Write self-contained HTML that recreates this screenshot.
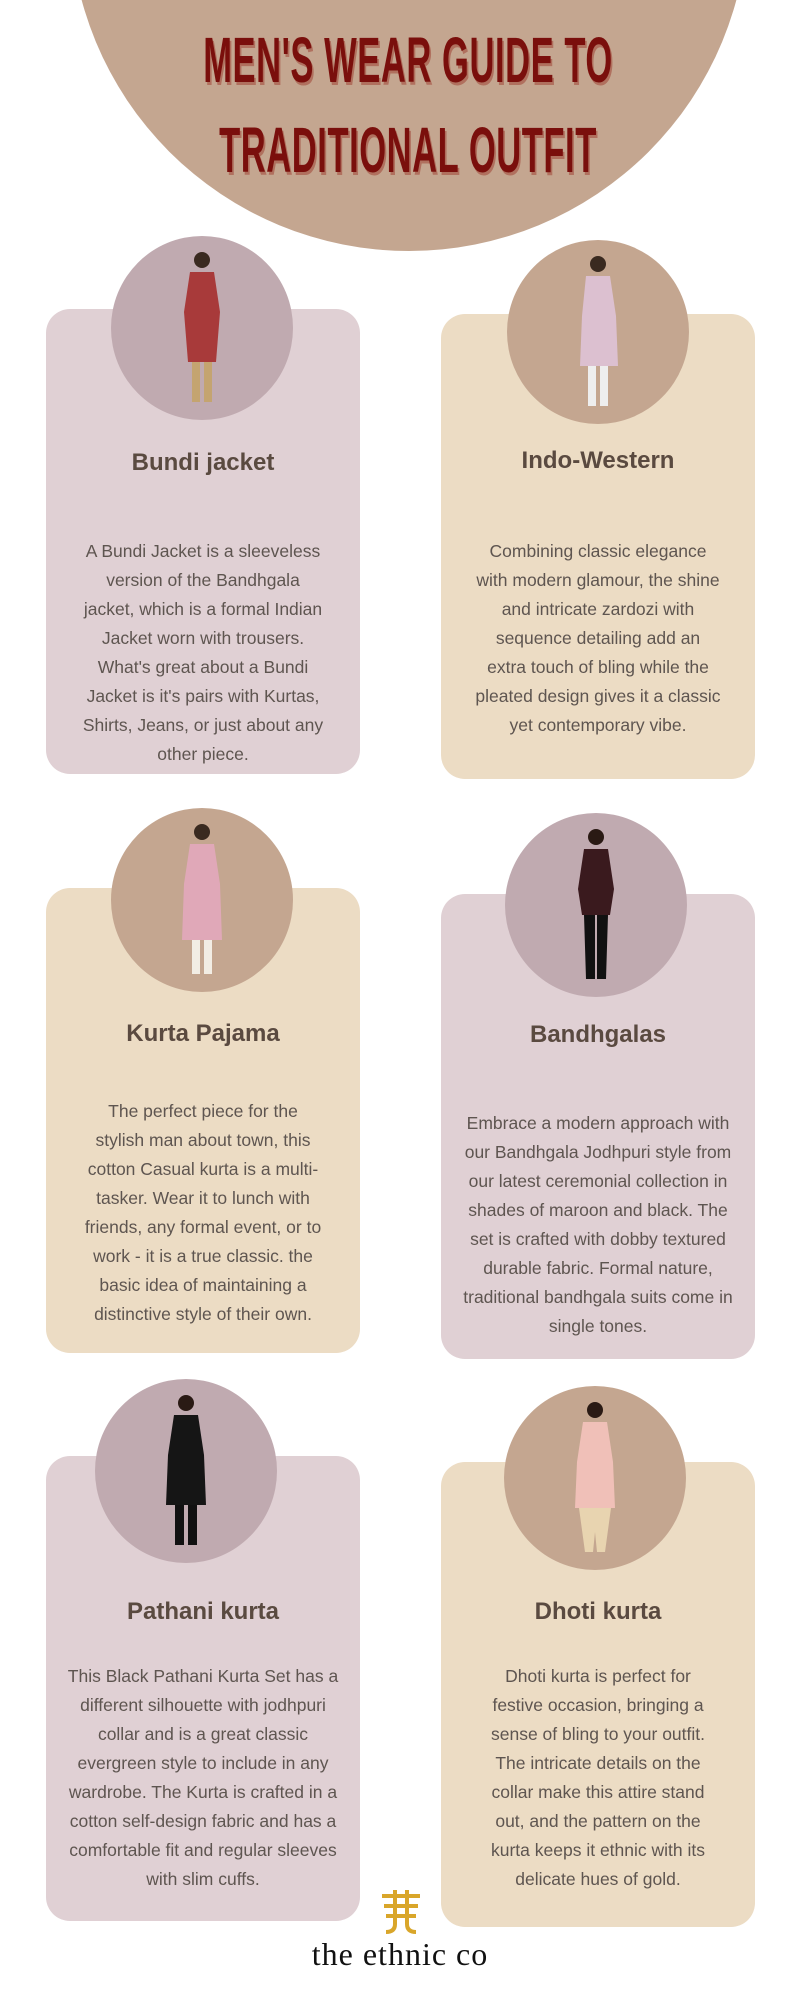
<!DOCTYPE html>
<html><head><meta charset="utf-8">
<style>
*{margin:0;padding:0;box-sizing:border-box}
body{width:800px;height:2000px;background:#fff;position:relative;overflow:hidden;font-family:"Liberation Sans",sans-serif}
.hc{position:absolute;left:70px;top:-427px;width:678px;height:678px;border-radius:50%;background:#c4a690}
.t{position:absolute;left:0;width:816px;text-align:center;font-weight:bold;font-size:64px;color:#7a0f0c;text-shadow:3px 3px 0 #b0705e;transform:scaleX(0.54);transform-origin:408px 0;letter-spacing:1px;line-height:1}
.card{position:absolute;width:314px;height:465px;border-radius:24px}
.p{background:#e0d0d4}.b{background:#ecdcc4}
.c{position:absolute;width:182px;height:184px;border-radius:50%}
.cm{background:#c0aab0}.ct{background:#c4a690}
.h{position:absolute;width:314px;text-align:center;font-weight:bold;font-size:24px;color:#5a4a40}
.tx{position:absolute;width:314px;text-align:center;font-size:17.5px;line-height:29px;color:#5e5550}
.c svg{position:absolute;left:61px;top:12px}
</style></head><body>
<div class="hc"></div>
<div class="t" style="top:28px">MEN'S WEAR GUIDE TO</div>
<div class="t" style="top:118px">TRADITIONAL OUTFIT</div>

<div class="card p" style="left:46px;top:309px"></div>
<div class="c cm" style="left:111px;top:236px"><svg width="60" height="160" viewBox="0 0 60 160"><circle cx="30" cy="12" r="8" fill="#3a2a20"/><path d="M18 24h24l6 40-4 50H16l-4-50z" fill="#a83a3a"/><path d="M20 114h8v40h-8zM32 114h8v40h-8z" fill="#c4a470"/></svg></div>
<div class="h" style="left:46px;top:449px">Bundi jacket</div>
<div class="tx" style="left:46px;top:537px">A Bundi Jacket is a sleeveless<br>version of the Bandhgala<br>jacket, which is a formal Indian<br>Jacket worn with trousers.<br>What's great about a Bundi<br>Jacket is it's pairs with Kurtas,<br>Shirts, Jeans, or just about any<br>other piece.</div>

<div class="card b" style="left:441px;top:314px"></div>
<div class="c ct" style="left:507px;top:240px"><svg width="60" height="160" viewBox="0 0 60 160"><circle cx="30" cy="12" r="8" fill="#3a2a20"/><path d="M18 24h24l6 40 2 50H12l2-50z" fill="#dcc0d0"/><path d="M20 114h8v40h-8zM32 114h8v40h-8z" fill="#eee"/></svg></div>
<div class="h" style="left:441px;top:447px">Indo-Western</div>
<div class="tx" style="left:441px;top:537px">Combining classic elegance<br>with modern glamour, the shine<br>and intricate zardozi with<br>sequence detailing add an<br>extra touch of bling while the<br>pleated design gives it a classic<br>yet contemporary vibe.</div>

<div class="card b" style="left:46px;top:888px"></div>
<div class="c ct" style="left:111px;top:808px"><svg width="60" height="160" viewBox="0 0 60 160"><circle cx="30" cy="12" r="8" fill="#3a2a20"/><path d="M18 24h24l6 40 2 56H10l2-56z" fill="#e0a8b8"/><path d="M20 120h8v34h-8zM32 120h8v34h-8z" fill="#f2ede4"/></svg></div>
<div class="h" style="left:46px;top:1020px">Kurta Pajama</div>
<div class="tx" style="left:46px;top:1097px">The perfect piece for the<br>stylish man about town, this<br>cotton Casual kurta is a multi-<br>tasker. Wear it to lunch with<br>friends, any formal event, or to<br>work - it is a true classic. the<br>basic idea of maintaining a<br>distinctive style of their own.</div>

<div class="card p" style="left:441px;top:894px"></div>
<div class="c cm" style="left:505px;top:813px"><svg width="60" height="160" viewBox="0 0 60 160"><circle cx="30" cy="12" r="8" fill="#2a1a14"/><path d="M18 24h24l6 40-4 26H16l-4-26z" fill="#3a1a1e"/><path d="M18 90h11v64h-9zM31 90h11l-2 64h-9z" fill="#111"/></svg></div>
<div class="h" style="left:441px;top:1021px">Bandhgalas</div>
<div class="tx" style="left:441px;top:1109px">Embrace a modern approach with<br>our Bandhgala Jodhpuri style from<br>our latest ceremonial collection in<br>shades of maroon and black. The<br>set is crafted with dobby textured<br>durable fabric. Formal nature,<br>traditional bandhgala suits come in<br>single tones.</div>

<div class="card p" style="left:46px;top:1456px"></div>
<div class="c cm" style="left:95px;top:1379px"><svg width="60" height="160" viewBox="0 0 60 160"><circle cx="30" cy="12" r="8" fill="#2a1a14"/><path d="M18 24h24l6 40 2 50H10l2-50z" fill="#151515"/><path d="M19 114h9v40h-9zM32 114h9v40h-9z" fill="#111"/></svg></div>
<div class="h" style="left:46px;top:1598px">Pathani kurta</div>
<div class="tx" style="left:46px;top:1662px">This Black Pathani Kurta Set has a<br>different silhouette with jodhpuri<br>collar and is a great classic<br>evergreen style to include in any<br>wardrobe. The Kurta is crafted in a<br>cotton self-design fabric and has a<br>comfortable fit and regular sleeves<br>with slim cuffs.</div>

<div class="card b" style="left:441px;top:1462px"></div>
<div class="c ct" style="left:504px;top:1386px"><svg width="60" height="160" viewBox="0 0 60 160"><circle cx="30" cy="12" r="8" fill="#2a1a14"/><path d="M18 24h24l6 40 2 46H10l2-46z" fill="#f0c0b8"/><path d="M14 110h32l-6 44h-8l-2-20-2 20h-8z" fill="#e8d4b0"/></svg></div>
<div class="h" style="left:441px;top:1598px">Dhoti kurta</div>
<div class="tx" style="left:441px;top:1662px">Dhoti kurta is perfect for<br>festive occasion, bringing a<br>sense of bling to your outfit.<br>The intricate details on the<br>collar make this attire stand<br>out, and the pattern on the<br>kurta keeps it ethnic with its<br>delicate hues of gold.</div>

<svg style="position:absolute;left:378px;top:1888px" width="46" height="48" viewBox="0 0 46 48"><g fill="none" stroke="#d9a62a" stroke-width="4"><path d="M4 8h38M6 18h34M8 28h30"/><path d="M17 2v34q0 8-9 8M29 2v34q0 8 9 8"/></g></svg>
<div style="position:absolute;left:0;width:800px;top:1936px;text-align:center;font-family:'Liberation Serif',serif;font-size:32px;color:#111;letter-spacing:1px">the ethnic co</div>
</body></html>
